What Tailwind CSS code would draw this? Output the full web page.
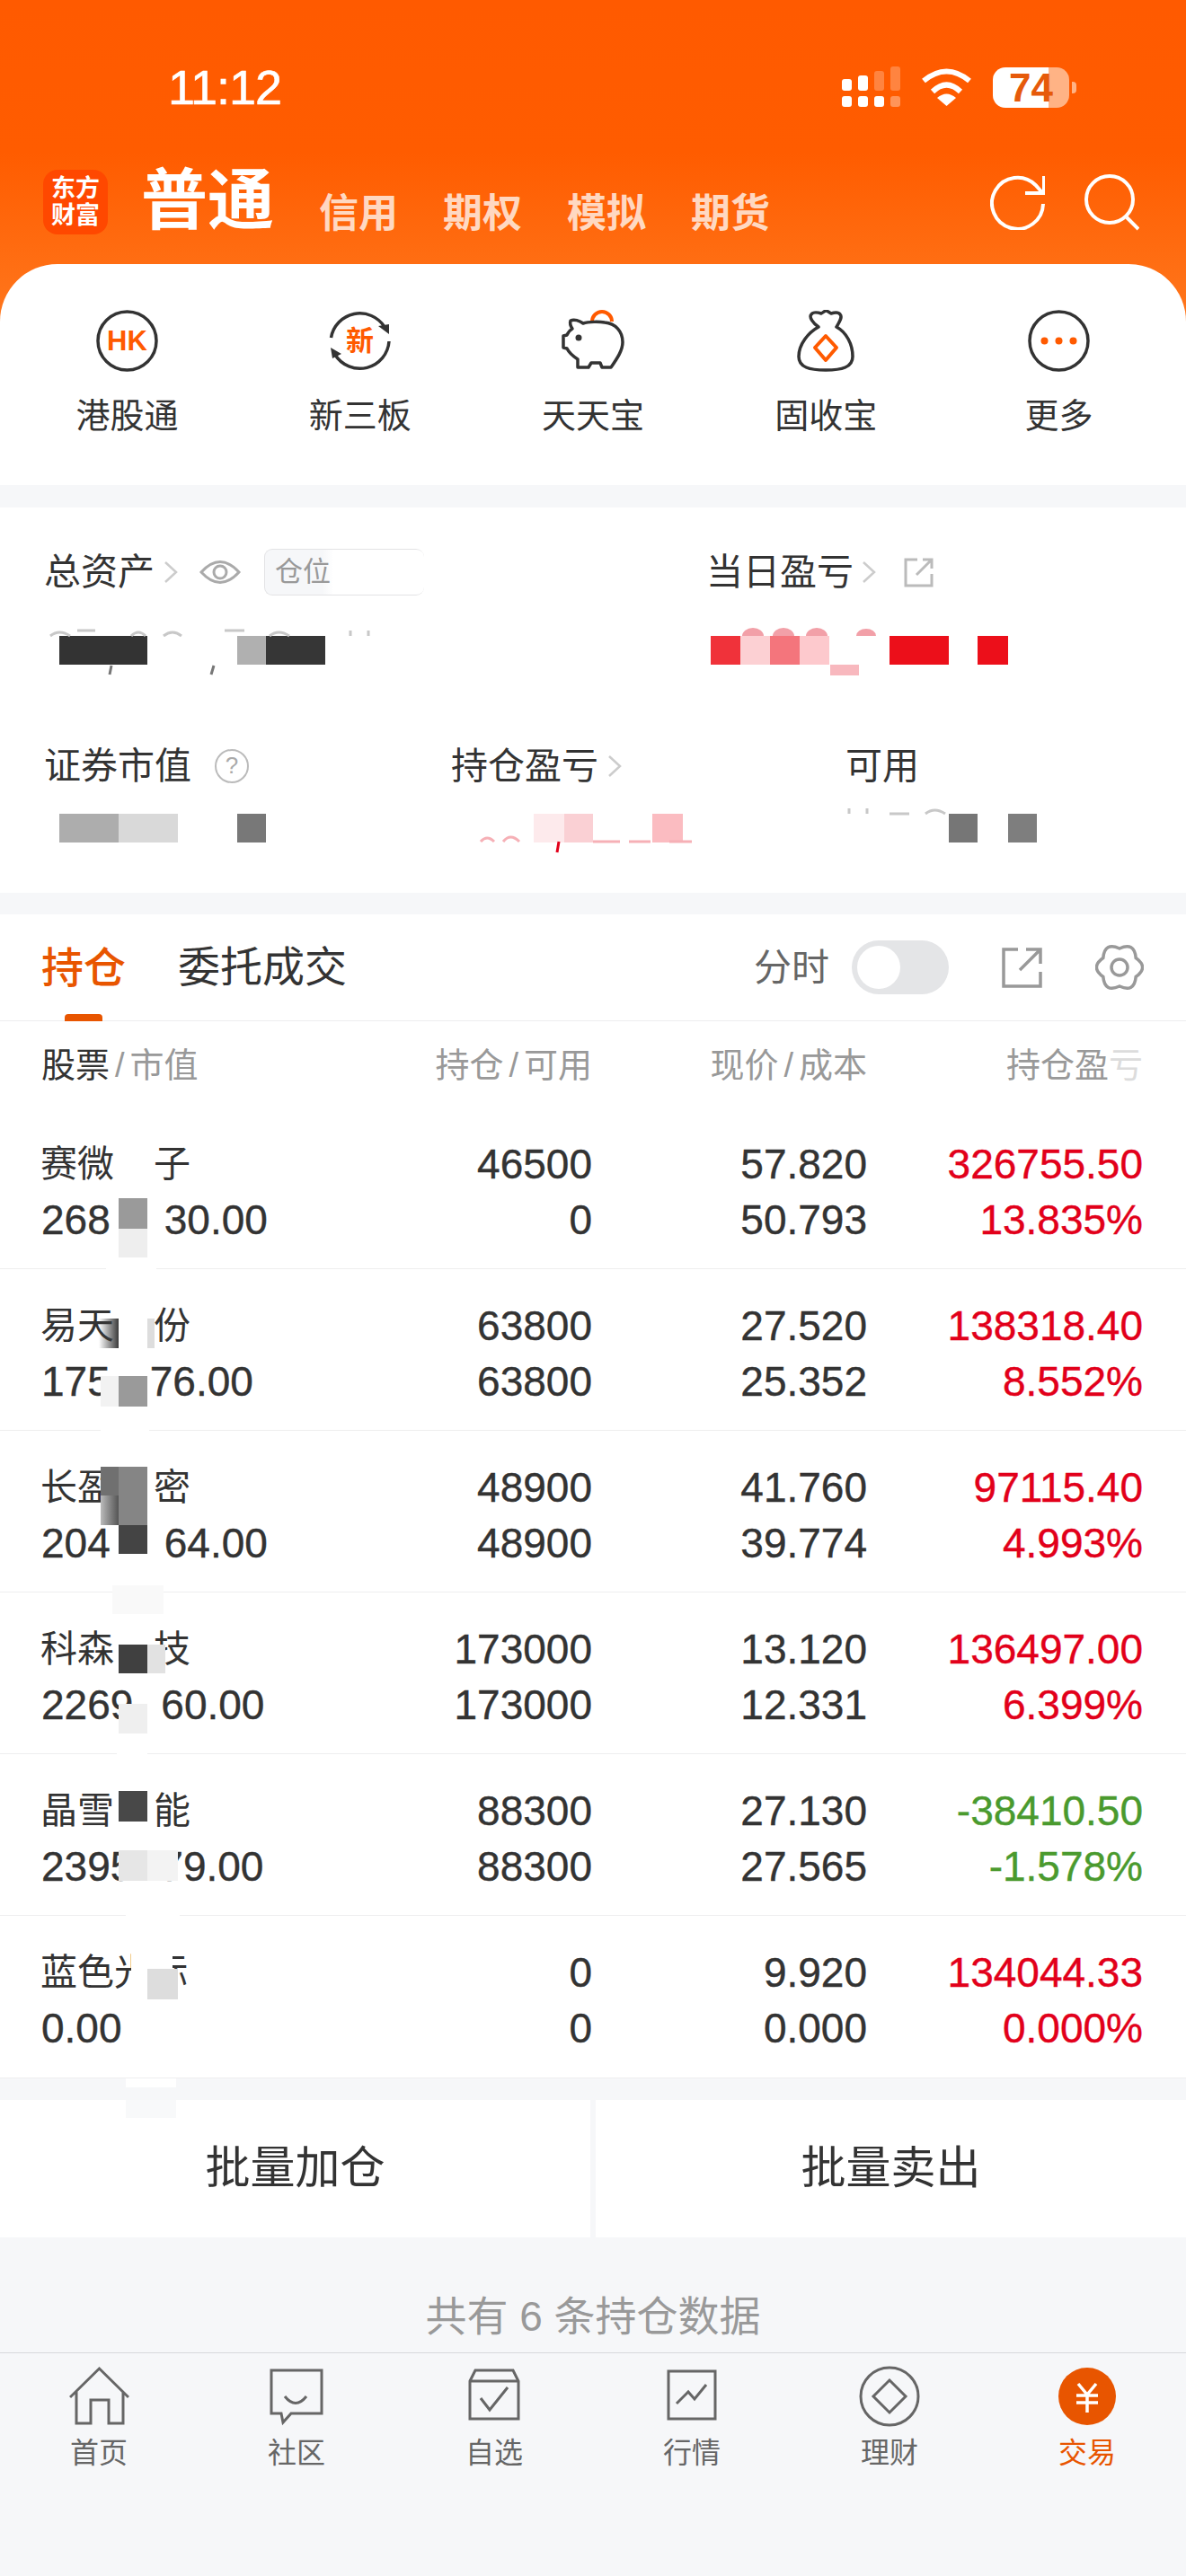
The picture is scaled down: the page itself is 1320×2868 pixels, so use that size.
<!DOCTYPE html>
<html>
  <head>
    <meta charset="utf-8">
    <title>交易</title>
    <script src="https://cdn.jsdelivr.net/npm/@tailwindcss/browser@4"></script>
  </head>
  <body class="w-[1320px] h-[2868px] overflow-hidden bg-[#f6f7f9] text-[#333] [font-family:'Liberation_Sans','Noto_Sans_CJK_SC',sans-serif]">

    <!-- orange header + shortcut card -->
    <div class="bg-[linear-gradient(180deg,#ff5a00_0px,#ff5c00_170px,#ff7a20_380px)]">
      <div class="flex justify-between items-center pt-[74px] pl-[187px] pr-[122px] h-[120px]">
        <span class="text-[54px] leading-[46px] text-white tracking-[-1px] [-webkit-text-stroke:0.6px_#fff]">11:12</span>
        <div class="flex items-center">
          <svg width="66" height="46" viewBox="0 0 66 46" fill="#fff">
            <rect x="0" y="14" width="11" height="13" rx="3"/><rect x="0" y="33" width="11" height="12" rx="3"/>
            <rect x="18" y="10" width="11" height="17" rx="3"/><rect x="18" y="33" width="11" height="12" rx="3"/>
            <rect x="36" y="5" width="11" height="22" rx="3" fill-opacity=".25"/><rect x="36" y="33" width="11" height="12" rx="3"/>
            <rect x="54" y="0" width="11" height="27" rx="3" fill-opacity=".25"/><rect x="54" y="33" width="11" height="12" rx="3" fill-opacity=".35"/>
          </svg>
          <svg class="ml-[22px]" width="57" height="42" viewBox="0 0 57 42" fill="none" stroke="#fff">
            <path d="M3 14Q28.5-7 54 14" stroke-width="6"/>
            <path d="M13 26Q28.5 11 44 26" stroke-width="6"/>
            <path d="M18 33Q28.5 24 39 33L28.5 42Z" fill="#fff" stroke="none"/>
          </svg>
          <div class="ml-[23px] w-[85px] h-[45px] rounded-[14px] bg-[linear-gradient(90deg,#fff_62px,#ffb385_62px)] text-center text-[44px] leading-[45px] font-bold text-[#e65a0a]">74</div>
          <div class="ml-[3px] w-[5px] h-[13px] rounded-r-[4px] bg-[#ffb385]"></div>
        </div>
      </div>

      <div class="flex items-center h-[72px] mt-[69px] pl-[48px] pr-[52px] text-white">
        <div class="w-[72px] h-[72px] rounded-[16px] bg-[#ff4800] flex flex-col items-center justify-center text-[27px] leading-[30px] font-bold">
          <span>东方</span><span>财富</span>
        </div>
        <span class="ml-[37px] mb-[2px] text-[74px] leading-[72px] font-bold">普通</span>
        <div class="flex gap-[50px] ml-[50px] mt-[26px] text-[44px] leading-[50px] font-bold text-white/75">
          <span>信用</span><span>期权</span><span>模拟</span><span>期货</span>
        </div>
        <div class="flex items-center gap-[44px] ml-auto">
          <svg width="61" height="61" viewBox="0 0 61 61" fill="none" stroke="#fff" stroke-width="4">
            <path d="M59 32a28.5 28.5 0 1 1-8.5-21l8 9"/><path d="M39 20h21V1"/>
          </svg>
          <svg width="61" height="63" viewBox="0 0 61 63" fill="none" stroke="#fff" stroke-width="4">
            <circle cx="28" cy="28" r="26"/><path d="M47 48l13 13"/>
          </svg>
        </div>
      </div>

      <div class="grid grid-cols-5 mt-[33px] h-[246px] px-[12px] pt-[51px] bg-white rounded-t-[64px] text-center text-[38px] leading-[50px]">
        <div class="flex flex-col items-center">
          <svg width="69" height="69" viewBox="0 0 69 69" fill="none" stroke="#333" stroke-width="3.5">
            <circle cx="34.5" cy="34.5" r="32.5"/>
            <text x="34.5" y="45" text-anchor="middle" font-size="31" font-weight="700" fill="#ff5a00" stroke="none">HK</text>
          </svg>
          <span class="mt-[24px]">港股通</span>
        </div>
        <div class="flex flex-col items-center">
          <svg width="69" height="69" viewBox="0 0 69 69" fill="none" stroke="#333" stroke-width="3.5">
            <path d="M2.5 31A32.5 32.5 0 0 1 62 19"/><path d="M55 18l12-2 0 11z" fill="#333" stroke="none"/>
            <path d="M67 35A32.5 32.5 0 0 1 7 50"/><path d="M2 42l2 12 10-5z" fill="#333" stroke="none"/>
            <text x="34.5" y="45" text-anchor="middle" font-size="31" font-weight="700" fill="#ff5a00" stroke="none">新</text>
          </svg>
          <span class="mt-[24px]">新三板</span>
        </div>
        <div class="flex flex-col items-center">
          <svg width="70" height="69" viewBox="0 0 70 69" fill="none" stroke="#333" stroke-width="3.5" stroke-linejoin="round">
            <path d="M34 13A11 11 0 0 1 56 13" stroke="#ff5a00" stroke-width="4"/>
            <path d="M10 12C14 10 20 12 24 15C30 13 42 13 48 14C60 15 68 24 68 36C68 45 62 54 55 64L45 64L43 59L33 59L30 64L18 64L18 55C12 51 8 47 6 43L2 42L2 29L6 28C8 24 10 22 12 21C10 18 9 15 10 12Z"/>
            <circle cx="19" cy="31" r="3.5" fill="#333" stroke="none"/>
          </svg>
          <span class="mt-[24px]">天天宝</span>
        </div>
        <div class="flex flex-col items-center">
          <svg width="64" height="69" viewBox="0 0 64 69" fill="none" stroke="#333" stroke-width="3.5" stroke-linejoin="round">
            <path d="M24 19C18 15 13 8 16 5C18 2 24 3 27 4C29 3 31 1 32 1C34 1 36 3 38 4C41 3 46 2 48 5C51 8 47 14 44 19C55 25 62 38 62 52C62 64 50 67 32 67C14 67 2 64 2 52C2 38 13 25 24 19Z"/>
            <path d="M32 29L44 42L32 56L20 42Z" stroke="#ff5a00" stroke-width="4"/>
          </svg>
          <span class="mt-[24px]">固收宝</span>
        </div>
        <div class="flex flex-col items-center">
          <svg width="69" height="69" viewBox="0 0 69 69" fill="none" stroke="#333" stroke-width="3.5">
            <circle cx="34.5" cy="34.5" r="32.5"/>
            <g fill="#ff5a00" stroke="none"><circle cx="18.5" cy="34.5" r="4"/><circle cx="34.5" cy="34.5" r="4"/><circle cx="50.5" cy="34.5" r="4"/></g>
          </svg>
          <span class="mt-[24px]">更多</span>
        </div>
      </div>
    </div>

    <!-- account summary, figures are pixelated in the source -->
    <div class="relative mt-[25px] h-[429px] pt-[42px] bg-white text-[41px] leading-[60px]">
      <div class="grid grid-cols-[737px_1fr] pl-[49px]">
        <div class="flex items-center">
          <span>总资产</span>
          <svg class="ml-[10px]" width="17" height="26" viewBox="0 0 17 26" fill="none" stroke="#ccc" stroke-width="2.5"><path d="M2 2l12 11L2 24"/></svg>
          <svg class="ml-[23px]" width="46" height="30" viewBox="0 0 46 30" fill="none" stroke="#aaa" stroke-width="3"><path d="M2 15Q23-8 44 15Q23 38 2 15Z"/><circle cx="23" cy="15" r="7"/></svg>
          <div class="ml-[26px] w-[178px] h-[52px] pl-[11px] rounded-[9px] border border-[#e3e3e5] border-r-0 bg-[linear-gradient(90deg,#f6f7f9_64px,#fff_76px)] text-[31px] leading-[50px] text-[#999]">仓位</div>
        </div>
        <div class="flex items-center">
          <span>当日盈亏</span>
          <svg class="ml-[9px]" width="17" height="26" viewBox="0 0 17 26" fill="none" stroke="#ccc" stroke-width="2.5"><path d="M2 2l12 11L2 24"/></svg>
          <svg class="ml-[30px]" width="33" height="33" viewBox="0 0 33 33" fill="none" stroke="#bbb" stroke-width="3"><path d="M15 2H2V31H31V18"/><path d="M14 19L31 2M21 2H31V12"/></svg>
        </div>
      </div>
      <div class="grid grid-cols-[738px_1fr] mt-[41px] pl-[49px]">
        <div class="flex h-[32px] ml-[17px]">
          <span class="w-[98px] bg-[#333]"></span><span class="w-[100px]"></span><span class="w-[32px] bg-[#b0b0b0]"></span><span class="w-[66px] bg-[#363636]"></span>
        </div>
        <div class="flex h-[32px] ml-[4px]">
          <span class="w-[33px] bg-[#f0323a]"></span><span class="w-[33px] bg-[#fcd0d3]"></span><span class="w-[33px] bg-[#f4757c]"></span><span class="w-[33px] bg-[#fdc9cd]"></span><span class="w-[67px]"></span><span class="w-[66px] bg-[#ec0f1a]"></span><span class="w-[32px]"></span><span class="w-[34px] bg-[#ec0f1a]"></span>
        </div>
      </div>
      <div class="grid grid-cols-[453px_439px_1fr] mt-[83px] pl-[49px]">
        <div class="flex items-center">
          <span>证券市值</span>
          <div class="ml-[26px] w-[38px] h-[38px] rounded-full border-[2.5px] border-[#bbb] text-center text-[26px] leading-[33px] text-[#aaa]">?</div>
        </div>
        <div class="flex items-center">
          <span>持仓盈亏</span>
          <svg class="ml-[10px]" width="17" height="26" viewBox="0 0 17 26" fill="none" stroke="#ccc" stroke-width="2.5"><path d="M2 2l12 11L2 24"/></svg>
        </div>
        <span>可用</span>
      </div>
      <div class="grid grid-cols-[453px_439px_1fr] mt-[23px] pl-[49px]">
        <div class="flex h-[32px] ml-[17px]">
          <span class="w-[66px] bg-[#adadad]"></span><span class="w-[66px] bg-[#d9d9d9]"></span><span class="w-[66px]"></span><span class="w-[32px] bg-[#787878]"></span>
        </div>
        <div class="flex h-[32px] ml-[92px]">
          <span class="w-[34px] bg-[#fdeaec]"></span><span class="w-[32px] bg-[#fad0d4]"></span><span class="w-[66px]"></span><span class="w-[34px] bg-[#fbbcc1]"></span>
        </div>
        <div class="flex h-[32px] ml-[115px]">
          <span class="w-[32px] bg-[#767676]"></span><span class="w-[34px]"></span><span class="w-[32px] bg-[#7e7e7e]"></span>
        </div>
      </div>
      <!-- bits of the pixelated figures that show past the blocks -->
      <svg class="absolute left-0 top-0" width="1320" height="429" viewBox="0 0 1320 429" fill="none" stroke-width="3">
        <g stroke="#c8c8c8">
          <path d="M56 143Q66 135 78 143M86 137H106M146 143Q154 135 162 143M182 143Q192 135 202 143M250 137H272M300 143Q310 135 322 143M390 143V137M410 143V137"/>
          <path d="M945 341V335M965 341V335M990 341H1012M1030 341Q1040 333 1052 341"/>
        </g>
        <g stroke="#777"><path d="M124 176L122 186M238 176L235 186"/></g>
        <g fill="#f2a0a8" stroke="none">
          <path d="M826 143A12 9 0 0 1 850 143ZM860 143A12 9 0 0 1 884 143ZM897 143A12 9 0 0 1 921 143ZM953 143A11 8 0 0 1 975 143Z"/>
        </g>
        <rect x="924" y="175" width="32" height="12" fill="#f8b8be" stroke="none"/>
        <g stroke="#f6b0b6">
          <path d="M535 372Q542 364 550 372M560 372Q568 362 578 372M660 372H690M700 372H724M745 372H770"/>
        </g>
        <path d="M622 372L620 384" stroke="#e2001a"/>
      </svg>
    </div>

    <!-- holdings -->
    <div class="mt-[24px] bg-white">
      <div class="flex items-center h-[119px] pl-[46px] pr-[47px] border-b border-[#eeeeef]">
        <div class="relative text-[47px] leading-[119px] font-medium text-[#e85500]">
          持仓
          <div class="absolute left-[26px] bottom-0 w-[42px] h-[8px] rounded-t-[4px] bg-[#e85500]"></div>
        </div>
        <span class="ml-[58px] text-[47px]">委托成交</span>
        <span class="ml-auto text-[42px] text-[#666]">分时</span>
        <div class="ml-[25px] w-[108px] h-[60px] p-[6px] rounded-full bg-[#e4e5e7]"><div class="w-[48px] h-[48px] rounded-full bg-white"></div></div>
        <svg class="ml-[59px]" width="45" height="45" viewBox="0 0 45 45" fill="none" stroke="#999" stroke-width="3.5"><path d="M18 2H2V43H43V27"/><path d="M20 25L43 2M27 2H43V18"/></svg>
        <svg class="ml-[59px]" width="54" height="54" viewBox="0 0 54 54" fill="none" stroke="#999" stroke-width="3.5"><path d="M27 6Q43.5-1.6 45.2 16.5Q60 27 45.2 37.5Q43.5 55.6 27 48Q10.5 55.6 8.8 37.5Q-6 27 8.8 16.5Q10.5-1.6 27 6Z"/><circle cx="27" cy="27" r="9"/></svg>
      </div>

      <div class="grid grid-cols-[312px_301px_306px_307px] items-center h-[96px] pt-[3px] pl-[46px] text-[38px] text-[#999]">
        <div><span class="text-[#333]">股票</span><span class="mx-[6px]">/</span>市值</div>
        <div class="text-right">持仓<span class="mx-[6px]">/</span>可用</div>
        <div class="text-right">现价<span class="mx-[6px]">/</span>成本</div>
        <div class="text-right">持仓盈<span class="text-[#dcdcdc]">亏</span></div>
      </div>

      <div class="relative grid grid-cols-[312px_301px_306px_307px] content-start h-[180px] pt-[32px] pl-[46px] text-[46px] leading-[62px] text-right [-webkit-text-stroke:0.4px] border-b border-[#eeeeef]">
        <div class="text-left text-[41px] -ml-[1px] [-webkit-text-stroke:0]">赛微<span class="inline-block w-[44px]"></span>子</div><div>46500</div><div>57.820</div><div class="text-[#e2001a]">326755.50</div>
        <div class="text-left">268<span class="inline-block w-[60px]"></span>30.00</div><div>0</div><div>50.793</div><div class="text-[#e2001a]">13.835%</div>
        <div class="absolute left-[132px] top-[101px] w-[32px] h-[34px] bg-[#9a9a9a]"></div>
        <div class="absolute left-[132px] top-[135px] w-[32px] h-[32px] bg-[#eeeeee]"></div>
        <div class="absolute left-[118px] bottom-[-1px] w-[56px] h-[2px] bg-white"></div>
      </div>

      <div class="relative grid grid-cols-[312px_301px_306px_307px] content-start h-[180px] pt-[32px] pl-[46px] text-[46px] leading-[62px] text-right [-webkit-text-stroke:0.4px] border-b border-[#eeeeef]">
        <div class="text-left text-[41px] -ml-[1px] [-webkit-text-stroke:0]">易天<span class="inline-block w-[44px]"></span>份</div><div>63800</div><div>27.520</div><div class="text-[#e2001a]">138318.40</div>
        <div class="text-left">175<span class="inline-block w-[44px]"></span>76.00</div><div>63800</div><div>25.352</div><div class="text-[#e2001a]">8.552%</div>
        <div class="absolute left-[110px] top-[55px] w-[22px] h-[33px] bg-linear-to-r from-white/0 to-[#3a3a3a]"></div>
        <div class="absolute left-[164px] top-[55px] w-[8px] h-[33px] bg-[#dddddd]"></div>
        <div class="absolute left-[112px] top-[119px] w-[20px] h-[34px] bg-[#f2f2f2]"></div>
        <div class="absolute left-[132px] top-[119px] w-[32px] h-[34px] bg-[#9a9a9a]"></div>
        <div class="absolute left-[112px] bottom-[-1px] w-[54px] h-[2px] bg-white"></div>
      </div>

      <div class="relative grid grid-cols-[312px_301px_306px_307px] content-start h-[180px] pt-[32px] pl-[46px] text-[46px] leading-[62px] text-right [-webkit-text-stroke:0.4px] border-b border-[#eeeeef]">
        <div class="text-left text-[41px] -ml-[1px] [-webkit-text-stroke:0]">长盈<span class="inline-block w-[44px]"></span>密</div><div>48900</div><div>41.760</div><div class="text-[#e2001a]">97115.40</div>
        <div class="text-left">204<span class="inline-block w-[60px]"></span>64.00</div><div>48900</div><div>39.774</div><div class="text-[#e2001a]">4.993%</div>
        <div class="absolute left-[112px] top-[40px] w-[20px] h-[32px] bg-[#707070]"></div>
        <div class="absolute left-[132px] top-[40px] w-[32px] h-[65px] bg-[#858585]"></div>
        <div class="absolute left-[112px] top-[72px] w-[20px] h-[33px] bg-linear-to-r from-[#bbbbbb] to-[#555555]"></div>
        <div class="absolute left-[132px] top-[105px] w-[32px] h-[32px] bg-[#444444]"></div>
        <div class="absolute left-[125px] top-[172px] w-[57px] h-[32px] z-10 bg-[#f9f9f9]"></div>
      </div>

      <div class="relative grid grid-cols-[312px_301px_306px_307px] content-start h-[180px] pt-[32px] pl-[46px] text-[46px] leading-[62px] text-right [-webkit-text-stroke:0.4px] border-b border-[#eeeeef]">
        <div class="text-left text-[41px] -ml-[1px] [-webkit-text-stroke:0]">科森<span class="inline-block w-[44px]"></span>技</div><div>173000</div><div>13.120</div><div class="text-[#e2001a]">136497.00</div>
        <div class="text-left">2269<span class="inline-block w-[31px]"></span>60.00</div><div>173000</div><div>12.331</div><div class="text-[#e2001a]">6.399%</div>
        <div class="absolute left-[132px] top-[58px] w-[32px] h-[32px] bg-[#404040]"></div>
        <div class="absolute left-[164px] top-[58px] w-[20px] h-[32px] bg-[#e2e2e2]"></div>
        <div class="absolute left-[132px] top-[124px] w-[32px] h-[33px] bg-[#efefef]"></div>
        <div class="absolute left-[130px] bottom-[-1px] w-[34px] h-[2px] bg-white"></div>
      </div>

      <div class="relative grid grid-cols-[312px_301px_306px_307px] content-start h-[180px] pt-[32px] pl-[46px] text-[46px] leading-[62px] text-right [-webkit-text-stroke:0.4px] border-b border-[#eeeeef]">
        <div class="text-left text-[41px] -ml-[1px] [-webkit-text-stroke:0]">晶雪<span class="inline-block w-[44px]"></span>能</div><div>88300</div><div>27.130</div><div class="text-[#4a9a2e]">-38410.50</div>
        <div class="text-left">2395<span class="inline-block w-[30px]"></span>79.00</div><div>88300</div><div>27.565</div><div class="text-[#4a9a2e]">-1.578%</div>
        <div class="absolute left-[132px] top-[41px] w-[32px] h-[34px] bg-[#484848]"></div>
        <div class="absolute left-[132px] top-[107px] w-[32px] h-[34px] bg-[#e6e6e6]"></div>
        <div class="absolute left-[164px] top-[107px] w-[34px] h-[34px] bg-[#f3f3f3]"></div>
        <div class="absolute left-[140px] bottom-[-1px] w-[60px] h-[2px] bg-white"></div>
      </div>

      <div class="relative grid grid-cols-[312px_301px_306px_307px] content-start h-[181px] pt-[32px] pl-[46px] text-[46px] leading-[62px] text-right [-webkit-text-stroke:0.4px] border-b border-[#eeeeef]">
        <div class="text-left text-[41px] -ml-[1px] [-webkit-text-stroke:0]">蓝色光标</div><div>0</div><div>9.920</div><div class="text-[#e2001a]">134044.33</div>
        <div class="text-left">0.00</div><div>0</div><div>0.000</div><div class="text-[#e2001a]">0.000%</div>
        <div class="absolute left-[146px] top-[32px] w-[46px] h-[62px] bg-white"></div>
        <div class="absolute left-[164px] top-[59px] w-[34px] h-[34px] bg-[#dddddd]"></div>
      </div>
    </div>

    <!-- batch buttons -->
    <div class="relative grid grid-cols-[657px_657px] gap-[6px] mt-[24px] h-[150px] text-[50px] text-center leading-[153px]">
      <div class="bg-white">批量加仓</div>
      <div class="bg-white">批量卖出</div>
      <div class="absolute left-[140px] top-[-24px] w-[56px] h-[10px] bg-white"></div>
      <div class="absolute left-[140px] top-0 w-[56px] h-[20px] bg-[#f8f9fa]"></div>
    </div>
    <div class="h-[131px] pt-[61px] text-center text-[46px] leading-[60px] text-[#999]">共有 6 条持仓数据</div>

    <!-- bottom tab bar -->
    <div class="grid grid-cols-6 h-[249px] pt-[14px] border-t border-[#d8d9dc] text-center text-[32px] leading-[44px] text-[#666]">
      <div class="flex flex-col items-center">
        <svg class="h-[68px]" width="67" height="68" viewBox="0 -2 67 68" fill="none" stroke="#666" stroke-width="3"><path d="M1 33L33.5 1L66 33M8 27V62H24V36H44V62H60V27"/></svg>
        <span class="mt-[7px]">首页</span>
      </div>
      <div class="flex flex-col items-center">
        <svg class="h-[68px]" width="60" height="68" viewBox="0 -3 60 68" fill="none" stroke="#666" stroke-width="3"><path d="M2 2H58V50H24L15 60L13 50H2Z"/><path d="M17 31Q29 46 41 31"/></svg>
        <span class="mt-[7px]">社区</span>
      </div>
      <div class="flex flex-col items-center">
        <svg class="h-[68px]" width="58" height="68" viewBox="0 -3 58 68" fill="none" stroke="#666" stroke-width="3"><path d="M2 14L8 2H50L56 14V56H2Z"/><path d="M2 14H56"/><path d="M14 33L24 46L44 21"/></svg>
        <span class="mt-[7px]">自选</span>
      </div>
      <div class="flex flex-col items-center">
        <svg class="h-[68px]" width="56" height="68" viewBox="0 -4 56 68" fill="none" stroke="#666" stroke-width="3"><path d="M2 2H54V55H2Z"/><path d="M11 38L24 25L31 33L44 17"/></svg>
        <span class="mt-[7px]">行情</span>
      </div>
      <div class="flex flex-col items-center">
        <svg class="h-[68px]" width="68" height="68" viewBox="0 0 68 68" fill="none" stroke="#666" stroke-width="3"><circle cx="34" cy="34" r="32"/><path d="M34 16L52 34L34 52L16 34Z"/></svg>
        <span class="mt-[7px]">理财</span>
      </div>
      <div class="flex flex-col items-center text-[#e85500]">
        <svg class="h-[68px]" width="66" height="68" viewBox="0 0 66 68"><circle cx="33" cy="34" r="32" fill="#e85500"/><path d="M23 20L33 32L43 20M21 33H45M21 41H45M33 32V52" fill="none" stroke="#fff" stroke-width="3.5"/></svg>
        <span class="mt-[7px]">交易</span>
      </div>
    </div>
  </body>
</html>
